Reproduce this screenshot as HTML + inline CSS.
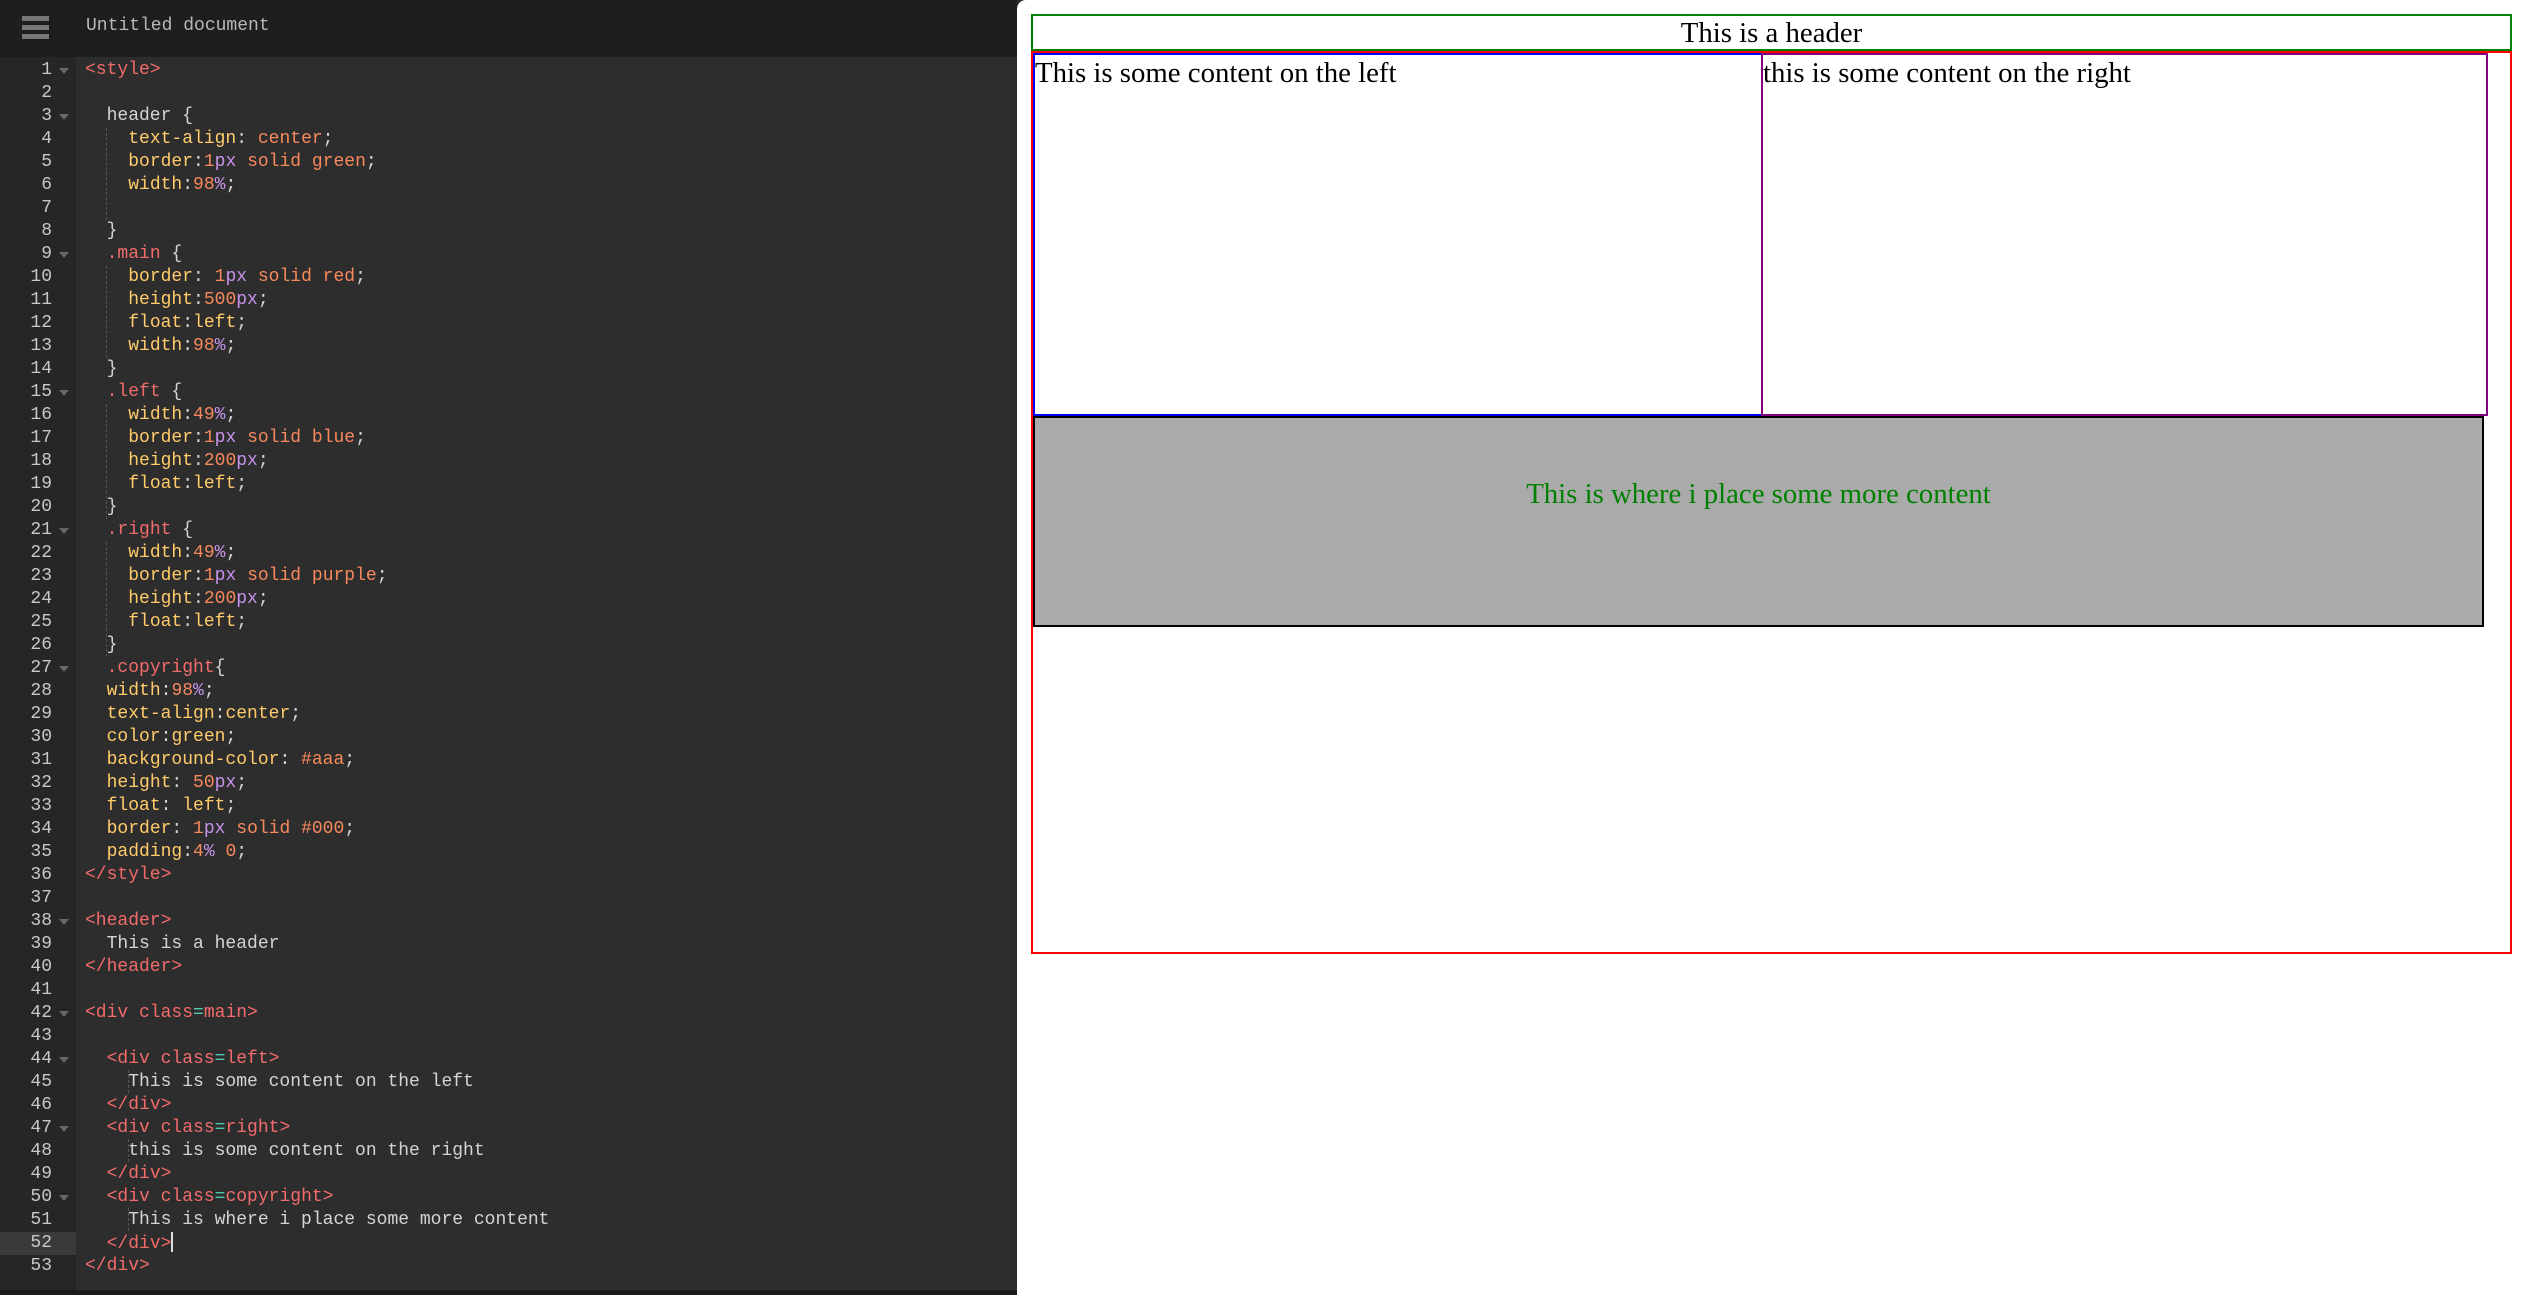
<!DOCTYPE html>
<html><head><meta charset="utf-8"><style>
html,body{margin:0;padding:0;width:2527px;height:1295px;overflow:hidden;background:#2b2b2b;}
#topbar{position:absolute;left:0;top:0;width:1017px;height:57px;background:#1e1e1e;}
.hb{position:absolute;left:22px;width:27px;height:5px;background:#777;}
#title{position:absolute;left:86px;top:16px;font:18px "Liberation Mono",monospace;color:#b8b8b8;}
#gutter{position:absolute;left:0;top:57px;width:76px;height:1233px;background:#262626;}
#editor{position:absolute;left:76px;top:57px;width:941px;height:1233px;background:#2d2d2d;}
#bottom{position:absolute;left:0;top:1290px;width:1017px;height:5px;background:#1b1b1b;}
.ln{position:absolute;left:0;width:52px;text-align:right;font:18px/23px "Liberation Mono",monospace;color:#c8c8c8;}
.fold{position:absolute;left:59px;width:0;height:0;border-left:5px solid transparent;border-right:5px solid transparent;border-top:6px solid #666;}
.cl{position:absolute;left:85px;font:18px/23px "Liberation Mono",monospace;color:#d4d4d4;white-space:pre;}
.t{color:#f26b6b}.p{color:#ffcb6b}.v{color:#f7895c}.u{color:#c792ea}.e{color:#4ec9b0}
.guide{position:absolute;width:0;border-left:1px dashed #555;}
#preview{position:absolute;left:1017px;top:0;width:1510px;height:1295px;background:#fff;border-top-left-radius:9px;}
.bx{position:absolute;box-sizing:border-box;font:28.8px/33px "Liberation Serif",serif;color:#000;}
</style></head><body>
<div id="topbar"><div class="hb" style="top:16px"></div><div class="hb" style="top:25px"></div><div class="hb" style="top:34px"></div><div id="title">Untitled document</div></div>
<div id="gutter"></div><div id="editor"></div><div id="bottom"></div>
<div style="position:absolute;left:0;top:1232px;width:76px;height:23px;background:#3a3a3a"></div>
<div class="guide" style="left:106px;top:128px;height:92px"></div>
<div class="guide" style="left:106px;top:266px;height:92px"></div>
<div class="guide" style="left:106px;top:404px;height:115px"></div>
<div class="guide" style="left:106px;top:542px;height:115px"></div>
<div class="guide" style="left:128px;top:1070px;height:23px"></div>
<div class="guide" style="left:128px;top:1139px;height:23px"></div>
<div class="guide" style="left:128px;top:1208px;height:23px"></div>
<div id="code"></div>
<script>
var L=[
'<span class="t">&lt;style&gt;</span>',
'',
'  header {',
'    <span class="p">text-align</span>: <span class="v">center</span>;',
'    <span class="p">border</span>:<span class="v">1</span><span class="u">px</span> <span class="v">solid green</span>;',
'    <span class="p">width</span>:<span class="v">98</span><span class="u">%</span>;',
'',
'  }',
'  <span class="t">.main</span> {',
'    <span class="p">border</span>: <span class="v">1</span><span class="u">px</span> <span class="v">solid red</span>;',
'    <span class="p">height</span>:<span class="v">500</span><span class="u">px</span>;',
'    <span class="p">float</span>:<span class="p">left</span>;',
'    <span class="p">width</span>:<span class="v">98</span><span class="u">%</span>;',
'  }',
'  <span class="t">.left</span> {',
'    <span class="p">width</span>:<span class="v">49</span><span class="u">%</span>;',
'    <span class="p">border</span>:<span class="v">1</span><span class="u">px</span> <span class="v">solid blue</span>;',
'    <span class="p">height</span>:<span class="v">200</span><span class="u">px</span>;',
'    <span class="p">float</span>:<span class="p">left</span>;',
'  }',
'  <span class="t">.right</span> {',
'    <span class="p">width</span>:<span class="v">49</span><span class="u">%</span>;',
'    <span class="p">border</span>:<span class="v">1</span><span class="u">px</span> <span class="v">solid purple</span>;',
'    <span class="p">height</span>:<span class="v">200</span><span class="u">px</span>;',
'    <span class="p">float</span>:<span class="p">left</span>;',
'  }',
'  <span class="t">.copyright</span>{',
'  <span class="p">width</span>:<span class="v">98</span><span class="u">%</span>;',
'  <span class="p">text-align</span>:<span class="p">center</span>;',
'  <span class="p">color</span>:<span class="p">green</span>;',
'  <span class="p">background-color</span>: <span class="v">#aaa</span>;',
'  <span class="p">height</span>: <span class="v">50</span><span class="u">px</span>;',
'  <span class="p">float</span>: <span class="p">left</span>;',
'  <span class="p">border</span>: <span class="v">1</span><span class="u">px</span> <span class="v">solid #000</span>;',
'  <span class="p">padding</span>:<span class="v">4</span><span class="u">%</span> <span class="v">0</span>;',
'<span class="t">&lt;/style&gt;</span>',
'',
'<span class="t">&lt;header&gt;</span>',
'  This is a header',
'<span class="t">&lt;/header&gt;</span>',
'',
'<span class="t">&lt;div class</span><span class="e">=</span><span class="t">main&gt;</span>',
'',
'  <span class="t">&lt;div class</span><span class="e">=</span><span class="t">left&gt;</span>',
'    This is some content on the left',
'  <span class="t">&lt;/div&gt;</span>',
'  <span class="t">&lt;div class</span><span class="e">=</span><span class="t">right&gt;</span>',
'    this is some content on the right',
'  <span class="t">&lt;/div&gt;</span>',
'  <span class="t">&lt;div class</span><span class="e">=</span><span class="t">copyright&gt;</span>',
'    This is where i place some more content',
'  <span class="t">&lt;/div&gt;</span><span style="display:inline-block;width:2px;height:20px;background:#ddd;vertical-align:-4px"></span>',
'<span class="t">&lt;/div&gt;</span>'];
var F=[1,3,9,15,21,27,38,42,44,47,50];
var h='';
for(var i=0;i<L.length;i++){var y=59+i*23;
h+='<div class="ln" style="top:'+y+'px">'+(i+1)+'</div>';
if(F.indexOf(i+1)>=0)h+='<div class="fold" style="top:'+(y+9)+'px"></div>';
h+='<div class="cl" style="top:'+y+'px">'+L[i]+'</div>';}
document.getElementById('code').innerHTML=h;
</script>
<div id="preview"></div>
<div class="bx" style="left:1031px;top:14px;width:1481px;height:37px;border:2px solid green;text-align:center;line-height:35px">This is a header</div>
<div class="bx" style="left:1031px;top:51px;width:1481px;height:903px;border:2px solid red"></div>
<div class="bx" style="left:1033px;top:53px;width:730px;height:363px;border:2px solid blue;padding-top:2px">This is some content on the left</div>
<div class="bx" style="left:1761px;top:53px;width:727px;height:363px;border:2px solid purple;padding-top:2px">this is some content on the right</div>
<div class="bx" style="left:1033px;top:416px;width:1451px;height:211px;border:2px solid #000;background:#aaa;color:green;text-align:center;padding-top:60px">This is where i place some more content</div>
</body></html>
